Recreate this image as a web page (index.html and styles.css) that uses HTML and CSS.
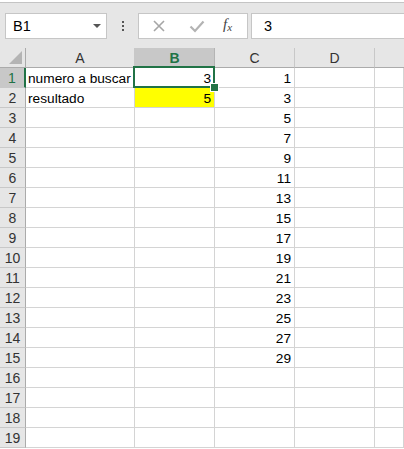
FILE: index.html
```html
<!DOCTYPE html>
<html>
<head>
<meta charset="utf-8">
<link rel="stylesheet" href="styles.css">
</head>
<body>
<div class="app">
  <div class="toolbar">
    <div class="namebox">
      <span class="name">B1</span>
      <svg class="caret" width="8" height="5" viewBox="0 0 8 5"><polygon points="0,0 8,0 4,4" fill="#555"/></svg>
    </div>
    <div class="dots"><i></i><i></i><i></i></div>
    <div class="fbtns">
      <svg class="fbtn" width="14" height="14" viewBox="0 0 14 14"><path d="M2 2 L12 12 M12 2 L2 12" stroke="#a6a6a6" stroke-width="1.6" fill="none"/></svg>
      <svg class="fbtn" width="16" height="14" viewBox="0 0 16 14"><path d="M1.5 7.5 L6 12 L14.5 2.5" stroke="#b3b3b3" stroke-width="2.2" fill="none"/></svg>
      <span class="fx">f<sub>x</sub></span>
    </div>
    <div class="finput">3</div>
  </div>
  <div class="sheet">
    <div class="corner"><svg width="13" height="13" viewBox="0 0 13 13"><polygon points="13,0 13,13 0,13" fill="#b4b4b4"/></svg></div>
    <div class="ch">A</div><div class="ch sel">B</div><div class="ch">C</div><div class="ch">D</div><div class="ch last"></div>

    <div class="rh sel">1</div><div class="c">numero a buscar</div><div class="c num active">3</div><div class="c num">1</div><div class="c"></div><div class="c"></div>
    <div class="rh">2</div><div class="c">resultado</div><div class="c num yellow">5</div><div class="c num">3</div><div class="c"></div><div class="c"></div>
    <div class="rh">3</div><div class="c"></div><div class="c"></div><div class="c num">5</div><div class="c"></div><div class="c"></div>
    <div class="rh">4</div><div class="c"></div><div class="c"></div><div class="c num">7</div><div class="c"></div><div class="c"></div>
    <div class="rh">5</div><div class="c"></div><div class="c"></div><div class="c num">9</div><div class="c"></div><div class="c"></div>
    <div class="rh">6</div><div class="c"></div><div class="c"></div><div class="c num">11</div><div class="c"></div><div class="c"></div>
    <div class="rh">7</div><div class="c"></div><div class="c"></div><div class="c num">13</div><div class="c"></div><div class="c"></div>
    <div class="rh">8</div><div class="c"></div><div class="c"></div><div class="c num">15</div><div class="c"></div><div class="c"></div>
    <div class="rh">9</div><div class="c"></div><div class="c"></div><div class="c num">17</div><div class="c"></div><div class="c"></div>
    <div class="rh">10</div><div class="c"></div><div class="c"></div><div class="c num">19</div><div class="c"></div><div class="c"></div>
    <div class="rh">11</div><div class="c"></div><div class="c"></div><div class="c num">21</div><div class="c"></div><div class="c"></div>
    <div class="rh">12</div><div class="c"></div><div class="c"></div><div class="c num">23</div><div class="c"></div><div class="c"></div>
    <div class="rh">13</div><div class="c"></div><div class="c"></div><div class="c num">25</div><div class="c"></div><div class="c"></div>
    <div class="rh">14</div><div class="c"></div><div class="c"></div><div class="c num">27</div><div class="c"></div><div class="c"></div>
    <div class="rh">15</div><div class="c"></div><div class="c"></div><div class="c num">29</div><div class="c"></div><div class="c"></div>
    <div class="rh">16</div><div class="c"></div><div class="c"></div><div class="c"></div><div class="c"></div><div class="c"></div>
    <div class="rh">17</div><div class="c"></div><div class="c"></div><div class="c"></div><div class="c"></div><div class="c"></div>
    <div class="rh">18</div><div class="c"></div><div class="c"></div><div class="c"></div><div class="c"></div><div class="c"></div>
    <div class="rh">19</div><div class="c"></div><div class="c"></div><div class="c"></div><div class="c"></div><div class="c"></div>
  </div>
</div>
</body>
</html>
```
FILE: styles.css
```css
* { box-sizing: border-box; }
html, body { margin: 0; padding: 0; background: #ffffff; overflow: hidden; }
body { font-family: "Liberation Sans", Arial, sans-serif; font-size: 14px; color: #000; }
.app { width: 404px; height: 449px; overflow: hidden; }

.toolbar {
  height: 48px;
  background: #e6e6e6;
  border-top: 1px solid #c4c4c4;
  margin-top: 2px;
  height: 46px;
  display: flex;
  align-items: flex-start;
  padding-top: 10px;
  padding-left: 5px;
}
.namebox {
  width: 102px;
  height: 26px;
  background: #fff;
  border: 1px solid #c6c6c6;
  display: flex;
  align-items: center;
  justify-content: space-between;
  padding: 0 5px 0 7px;
}
.name { font-size: 14.5px; color: #000; }
.caret { display: block; margin-top: 1px; }
.dots {
  width: 31px;
  height: 26px;
  display: flex;
  flex-direction: column;
  align-items: center;
  justify-content: center;
  gap: 2px;
}
.dots i { display: block; width: 2px; height: 2px; background: #555; }
.fbtns {
  width: 110px;
  height: 26px;
  background: #fff;
  border: 1px solid #c6c6c6;
  display: flex;
  align-items: center;
  padding-left: 13px;
}
.fbtn { display: block; }
.fbtns .fbtn:nth-child(2) { margin-left: 23px; }
.fx {
  margin-left: 18px;
  font-family: "Liberation Serif", "Times New Roman", serif;
  font-style: italic;
  font-size: 15px;
  color: #444;
  line-height: 1;
  margin-top: -3px;
}
.fx sub { font-size: 11px; vertical-align: -2px; margin-left: 0; }
.finput {
  flex: 1;
  margin-left: 3px;
  height: 26px;
  background: #fff;
  border: 1px solid #c6c6c6;
  border-right: none;
  padding-left: 12px;
  display: flex;
  align-items: center;
  font-size: 14.5px;
}

.sheet {
  display: grid;
  grid-template-columns: 26px 109px 80px 80px 80px 1fr;
  grid-template-rows: 20px;
  grid-auto-rows: 20px;
}
.corner, .ch, .rh {
  background: #e6e6e6;
  color: #333;
}
.corner {
  border-right: 1px solid #ababab;
  border-bottom: 1px solid #ababab;
  display: flex;
  align-items: flex-end;
  justify-content: flex-end;
  padding: 0 3px 3px 0;
}
.corner svg { display: block; }
.ch {
  border-right: 1px solid #c8c8c8;
  border-bottom: 1px solid #ababab;
  display: flex;
  align-items: center;
  justify-content: center;
  font-size: 14px;
  padding-top: 1px;
}
.ch.sel {
  background: #c8c8c8;
  color: #217346;
  font-weight: bold;
  border-bottom: 2px solid #217346;
  border-right-color: #b4b4b4;
}
.ch.last { border-right: none; }
.rh {
  border-right: 1px solid #ababab;
  border-bottom: 1px solid #c8c8c8;
  display: flex;
  align-items: center;
  justify-content: center;
  font-size: 14px;
  padding-top: 1px;
}
.rh.sel {
  background: #c8c8c8;
  color: #217346;
  border-right: 2px solid #217346;
}
.c {
  border-right: 1px solid #d4d4d4;
  border-bottom: 1px solid #d4d4d4;
  padding: 0 2px 0 2px;
  display: flex;
  align-items: center;
  white-space: nowrap;
  font-size: 13.7px;
  padding-top: 1px;
}
.c.num { justify-content: flex-end; padding-right: 3px; }
.c.yellow { background: #ffff00; }
.c.active { position: relative; }
.c.active::after {
  content: "";
  position: absolute;
  left: -2px;
  top: -2px;
  right: -1px;
  bottom: -1px;
  border: 2px solid #217346;
  z-index: 2;
}
.c.active::before {
  content: "";
  position: absolute;
  right: -5px;
  bottom: -5px;
  width: 7px;
  height: 7px;
  background: #217346;
  border: 1px solid #fff;
  z-index: 3;
}
```
